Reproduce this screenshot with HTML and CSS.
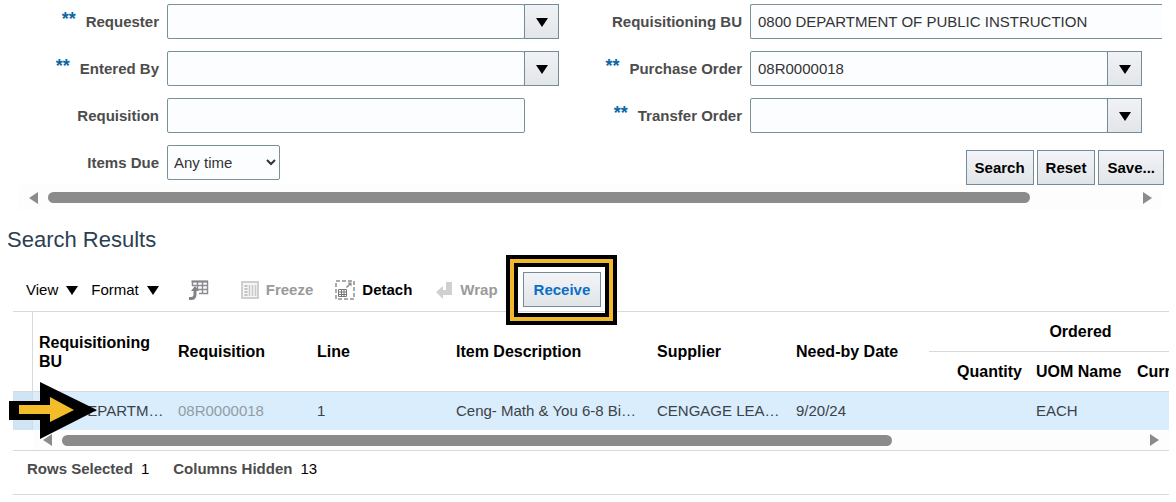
FILE: index.html
```html
<!DOCTYPE html>
<html lang="en">
  <head>
    <meta charset="UTF-8" />
    <title>Receive Items</title>
    <link rel="stylesheet" href="styles.css">
  </head>
  <body>
    <section class="search-panel">
      <form class="search-form">
        <label for="requester"><span class="req">**</span>Requester</label>
        <div class="combo">
          <input type="text" id="requester">
          <button type="button" aria-label="Search requester"><span class="caret"></span></button>
        </div>
        <label for="req-bu">Requisitioning BU</label>
        <div class="combo wide">
          <input type="text" id="req-bu" value="0800 DEPARTMENT OF PUBLIC INSTRUCTION">
        </div>

        <label for="entered-by"><span class="req">**</span>Entered By</label>
        <div class="combo">
          <input type="text" id="entered-by">
          <button type="button" aria-label="Search entered by"><span class="caret"></span></button>
        </div>
        <label for="purchase-order"><span class="req">**</span>Purchase Order</label>
        <div class="combo">
          <input type="text" id="purchase-order" value="08R0000018">
          <button type="button" aria-label="Search purchase order"><span class="caret"></span></button>
        </div>

        <label for="requisition">Requisition</label>
        <div class="combo plain">
          <input type="text" id="requisition">
        </div>
        <label for="transfer-order"><span class="req">**</span>Transfer Order</label>
        <div class="combo">
          <input type="text" id="transfer-order">
          <button type="button" aria-label="Search transfer order"><span class="caret"></span></button>
        </div>

        <label for="items-due">Items Due</label>
        <select id="items-due">
          <option>Any time</option>
          <option>Today</option>
        </select>
        <div class="form-actions">
          <button type="button" class="btn">Search</button>
          <button type="button" class="btn">Reset</button>
          <button type="button" class="btn">Save...</button>
        </div>
      </form>
      <div class="scrollbar form-scroll">
        <span class="arrow-left"></span>
        <div class="track"><div class="thumb"></div></div>
        <span class="arrow-right"></span>
      </div>
    </section>

    <section class="results">
      <h2>Search Results</h2>

      <div class="toolbar">
        <button type="button" class="menu view">View <span class="caret"></span></button>
        <button type="button" class="menu format">Format <span class="caret"></span></button>
        <button type="button" class="tool export" aria-label="Export to Excel">
          <svg width="20" height="20" viewBox="0 0 20 20">
            <path fill="#fff" stroke="#8b8d91" stroke-width="1.500" d="M3 1.500H18.500V13.500H10M3 5.500H18.500M8 9.500H18.500M8.500 1v8M13.500 1v12.500M3.500 1v5" />
            <path fill="none" stroke="#85878b" stroke-width="2" d="M2.500 1.500H19" />
            <path fill="#808286" d="M6 6l4 5H7.500v3c0 4-2 6-5.500 6H0v-3h2c2 0 2.500-1 2.500-3v-3H2z" />
          </svg>
        </button>
        <button type="button" class="tool freeze" disabled>
          <svg width="18" height="18" viewBox="0 0 18 18">
            <rect x="1" y="1" width="16" height="16" fill="#f6f6f6" stroke="#cfcfcf" stroke-width="2" />
            <path stroke="#c8c8c8" stroke-width="1.500" d="M8.500 4v11M11.500 4v11M14.500 4v11" />
            <path stroke="#c2c2c2" stroke-width="3" stroke-dasharray="2 1" d="M5 4v11" />
          </svg>
          Freeze
        </button>
        <button type="button" class="tool detach">
          <svg width="20" height="20" viewBox="0 0 20 20" fill="none">
            <rect x="1" y="1" width="18" height="18" stroke="#8e8e8e" stroke-width="1.500" stroke-dasharray="4 2" />
            <path stroke="#777" d="M3.500 9.500h8v7h-8zM3 12h9M3 14.500h9M6.500 9v8M9 9v8" />
            <path stroke="#888" stroke-width="1.500" d="M11.500 7.500L15.500 3.500" />
            <path fill="#888" d="M12.500 2.500h4v4z" />
          </svg>
          Detach
        </button>
        <button type="button" class="tool wrap" disabled>
          <svg width="17" height="18" viewBox="0 0 17 18">
            <path fill="#d0d0d0" d="M10 1h6v13H7v4L0 11l7-6v4h3z" />
          </svg>
          Wrap
        </button>
        <div class="receive">
          <button type="button" class="btn">Receive</button>
          <span class="highlight"></span>
        </div>
      </div>

      <div class="grid">
        <div class="table-wrap">
          <table>
            <colgroup>
              <col class="c-sel">
              <col class="c-std">
              <col class="c-std">
              <col class="c-std">
              <col class="c-item">
              <col class="c-std">
              <col class="c-std">
              <col class="c-qty">
              <col class="c-qty">
              <col class="c-qty">
            </colgroup>
            <thead>
              <tr>
                <td rowspan="2" class="sel"></td>
                <th rowspan="2">Requisitioning BU</th>
                <th rowspan="2">Requisition</th>
                <th rowspan="2">Line</th>
                <th rowspan="2">Item Description</th>
                <th rowspan="2">Supplier</th>
                <th rowspan="2">Need-by Date</th>
                <th colspan="3" class="group">Ordered</th>
              </tr>
              <tr>
                <th class="num">Quantity</th>
                <th>UOM Name</th>
                <th>Currency</th>
              </tr>
            </thead>
            <tbody>
              <tr>
                <td class="sel"></td>
                <td>0800 DEPARTM…</td>
                <td class="muted">08R0000018</td>
                <td>1</td>
                <td>Ceng- Math &amp; You 6-8 Bi…</td>
                <td>CENGAGE LEA…</td>
                <td>9/20/24</td>
                <td></td>
                <td>EACH</td>
                <td></td>
              </tr>
            </tbody>
          </table>
        </div>
        <div class="scrollbar grid-scroll">
          <span class="arrow-left"></span>
          <div class="track"><div class="thumb"></div></div>
          <span class="arrow-right"></span>
        </div>
        <div class="status">
          <span><b>Rows Selected</b>1</span>
          <span><b>Columns Hidden</b>13</span>
        </div>

        <!-- callout pointing at the selected row -->
        <svg class="pointer" width="88" height="57" viewBox="0 0 88 57">
          <path d="M0 19h31V0l57 28-57 29V38H0z" />
          <path fill="#f2bc2b" d="M10 23h31v-8l24 13-24 12v-8H10z" />
        </svg>
      </div>
    </section>
  </body>
</html>
```

FILE: styles.css
```css
* {
  box-sizing: border-box;
}
body {
  margin: 0;
  background: #fff;
  color: #000;
  font-family: "Liberation Sans", Arial, sans-serif;
  font-size: 15px;
  line-height: 18px;
}
button,
input,
select {
  font: inherit;
}
.search-panel {
  margin-right: 14px;
}

/* search form */
.search-form {
  display: grid;
  grid-template-columns: 159px 1fr 175px 1fr;
  grid-template-rows: 35px 35px 35px 40px;
  gap: 12px 8px;
  padding: 4px 20px 0 0;
}
.search-form label {
  height: 35px;
  line-height: 35px;
  text-align: right;
  font-weight: bold;
  color: #4c4c4c;
  white-space: nowrap;
}
.req {
  margin-right: 10px;
  font-size: 18px;
  line-height: 18px;
  vertical-align: 2px;
  color: #0b66a8;
}
.combo {
  display: flex;
  height: 35px;
}
.combo input {
  flex: 1;
  min-width: 0;
  padding: 0 7px;
  border: 1px solid #7b9198;
  border-radius: 2px;
  background: #fbfdff;
  color: #333;
}
.combo button {
  display: flex;
  align-items: center;
  justify-content: center;
  width: 35px;
  margin-left: -1px;
  padding: 0;
  border: 1px solid #748b9b;
  background: linear-gradient(#f0f2f5, #e3e6e8);
}
.combo.plain {
  margin-right: 34px;
}
.combo.wide {
  margin-right: -20px;
}
.combo.wide input {
  border-right: 0;
  border-radius: 2px 0 0 2px;
}
.caret {
  display: inline-block;
  margin-top: 2px;
  border: solid transparent;
  border-width: 9px 6px 0;
  border-top-color: #000;
}
.search-form select {
  width: 113px;
  height: 35px;
  padding: 0 2px;
  border: 1px solid #7b9198;
  border-radius: 2px;
  background: #fbfdff;
  color: #333;
}
.form-actions {
  grid-column: 3 / 5;
  display: flex;
  justify-content: flex-end;
  align-items: flex-end;
  gap: 3px;
  margin-right: -22px;
}
.btn {
  height: 35px;
  padding: 0 8px;
  border: 1px solid #748b9b;
  background: linear-gradient(#f2f4f7, #e2e5e8);
  color: #000;
  font-weight: bold;
}

/* scrollbars */
.scrollbar {
  display: flex;
  align-items: center;
  gap: 10px;
  padding: 0 10px;
  background: #fdfdfd;
}
.track {
  flex: 1;
}
.thumb {
  height: 11px;
  border-radius: 6px;
  background: #8b8b8b;
}
.arrow-left,
.arrow-right {
  border: solid transparent;
  border-width: 6px 0;
}
.arrow-left {
  border-right: 9px solid #8b8b8b;
}
.arrow-right {
  border-left: 9px solid #8b8b8b;
}
.form-scroll {
  height: 25px;
  margin-left: 19px;
}
.form-scroll .thumb {
  width: 90.5%;
}
.grid-scroll {
  height: 20px;
  margin-left: 20px;
}
.grid-scroll .thumb {
  width: 77%;
}

/* results */
h2 {
  margin: 16px 0 0 7px;
  font-size: 22px;
  line-height: 28px;
  font-weight: normal;
  color: #2b3f52;
}
.toolbar {
  display: flex;
  align-items: center;
  padding: 18px 26px 4px;
}
.menu,
.tool {
  display: flex;
  align-items: center;
  padding: 0;
  border: 0;
  background: none;
  color: #000;
}
.menu {
  gap: 8px;
}
.view {
  margin-right: 13px;
}
.format {
  margin-right: 30px;
}
.tool {
  gap: 7px;
  font-weight: bold;
}
.tool:disabled {
  color: #9a9a9a;
}
.export {
  margin-right: 32px;
}
.freeze {
  margin-right: 22px;
}
.detach {
  margin-right: 24px;
}
.wrap {
  margin-right: 25px;
}
.receive {
  position: relative;
}
.receive .btn {
  display: block;
  padding: 0 10px;
  color: #0a6fc6;
}
.highlight {
  position: absolute;
  inset: -17px -16px -18px -17px;
  z-index: 1;
  border: 4px solid #000;
  box-shadow: inset 0 0 0 4px #f0b92c, inset 0 0 0 8px #000;
  pointer-events: none;
}
.grid {
  position: relative;
  margin: 0 7px 0 13px;
  border-top: 1px solid #d6dade;
}
.table-wrap {
  overflow: hidden;
}
table {
  width: 1217px;
  table-layout: fixed;
  border-collapse: separate;
  border-spacing: 0;
}
.c-sel {
  width: 20px;
}
.c-std {
  width: 139px;
}
.c-item {
  width: 201px;
}
.c-qty {
  width: 101px;
}
th,
td {
  padding: 0 6px;
  text-align: left;
  white-space: nowrap;
}
th {
  height: 40px;
  border-bottom: 1px solid #d6dade;
  font-size: 16px;
  line-height: 19px;
  white-space: normal;
}
thead .sel {
  border-bottom: 1px solid #d6dade;
}
th.group {
  text-align: center;
}
th.num {
  padding-right: 8px;
  text-align: right;
}
td {
  color: #3c4248;
}
tbody td {
  height: 38px;
  background: #d9edfc;
}
.sel {
  border-right: 1px solid #d6dade;
}
tbody .sel {
  background: #d0e4f3;
}
td.muted {
  color: #929ca4;
}
.status {
  display: flex;
  gap: 24px;
  padding: 9px 14px 16px;
  border: solid #d6dade;
  border-width: 1px 0;
}
.status b {
  margin-right: 8px;
  color: #4c4c4c;
}
.pointer {
  position: absolute;
  left: -4px;
  bottom: 56px;
}
```
